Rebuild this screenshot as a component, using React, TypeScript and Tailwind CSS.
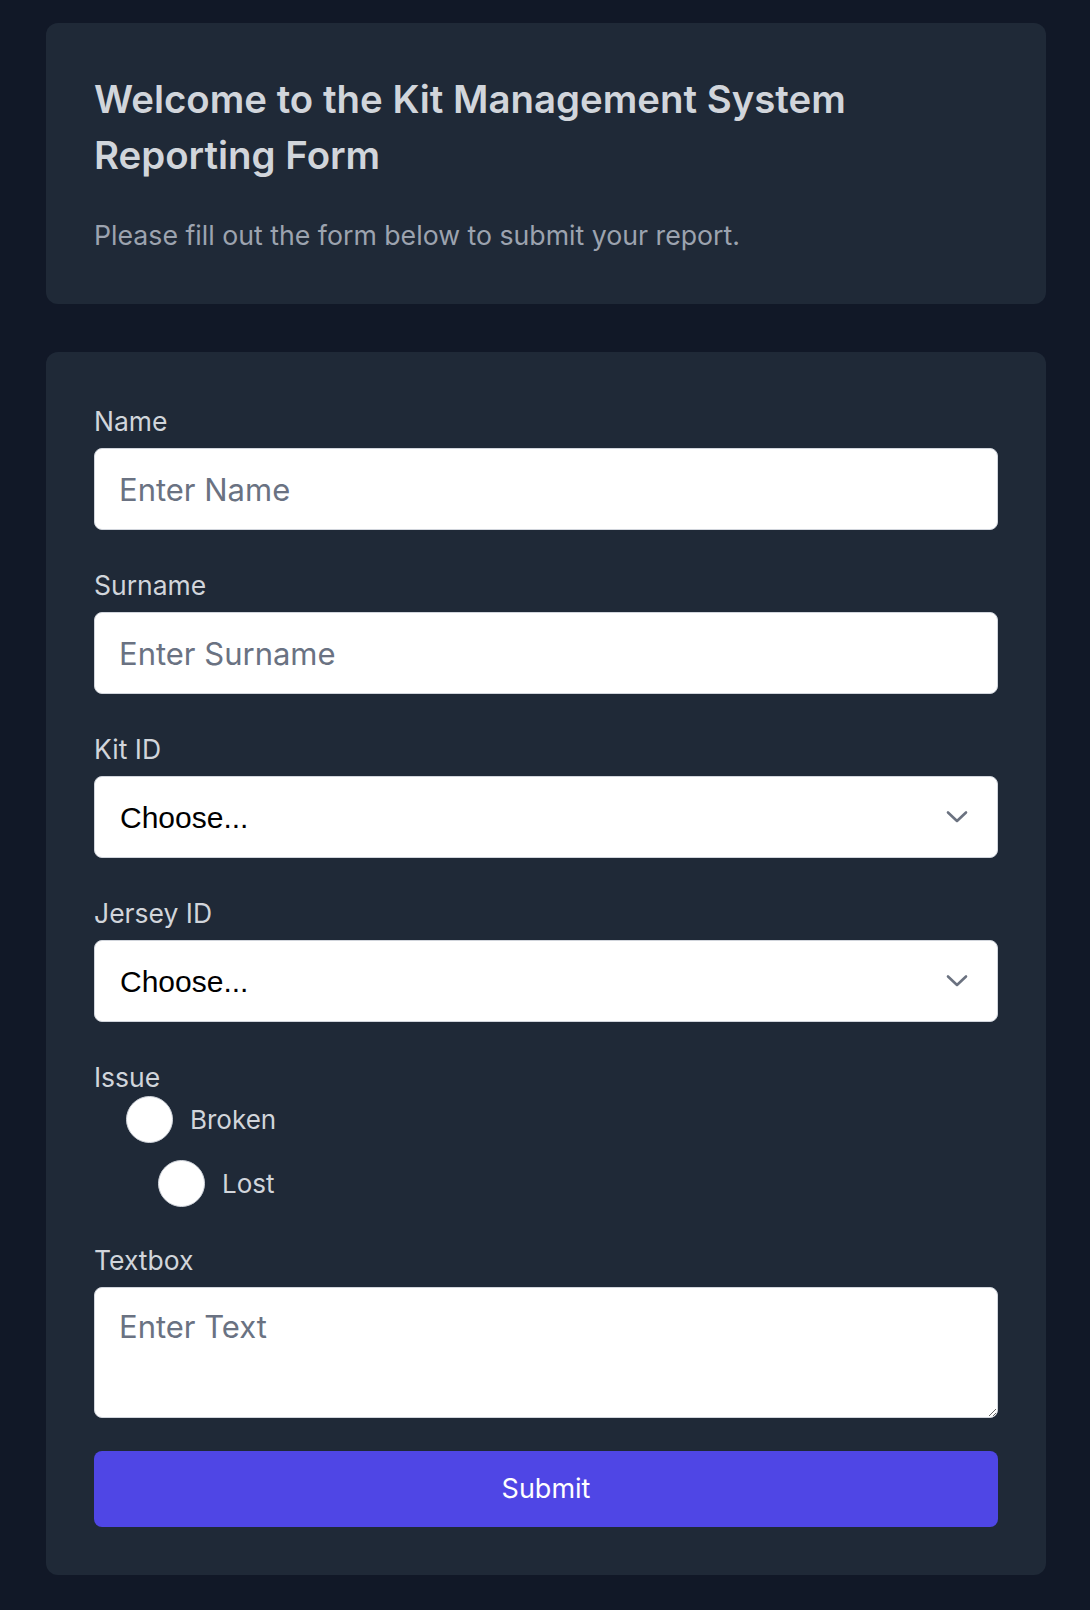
import React from "react";

const font = { fontFamily: "Inter, 'Noto Sans', sans-serif" };

function Chevron() {
  return (
    <svg
      className="pointer-events-none absolute right-[30px] top-1/2 -translate-y-1/2"
      width="22"
      height="14"
      viewBox="0 0 22 14"
      fill="none"
    >
      <path d="M2 2.5 L11 11 L20 2.5" stroke="#6b7280" strokeWidth="2.6" strokeLinecap="round" strokeLinejoin="round" />
    </svg>
  );
}

function Label({ children, className = "" }: { children: React.ReactNode; className?: string }) {
  return <label className={`block text-[26.5px] leading-[32px] text-[#d1d5db] ${className}`}>{children}</label>;
}

function TextField({ label, placeholder }: { label: string; placeholder: string }) {
  return (
    <div className="mb-[39px]">
      <Label className="mb-[11px]">{label}</Label>
      <input
        type="text"
        placeholder={placeholder}
        className="block h-[82px] w-full rounded-lg border border-gray-300 bg-white px-6 text-[31px] text-gray-900 placeholder:text-gray-500 outline-none"
      />
    </div>
  );
}

function SelectField({ label }: { label: string }) {
  return (
    <div className="mb-[39px]">
      <Label className="mb-[11px]">{label}</Label>
      <div className="relative">
        <select
          defaultValue=""
          className="block h-[82px] w-full appearance-none rounded-lg border border-gray-300 bg-white pl-[25px] pr-16 text-[30px] text-black outline-none"
          style={{ fontFamily: "'Liberation Sans', Arial, sans-serif" }}
        >
          <option value="">Choose...</option>
        </select>
        <Chevron />
      </div>
    </div>
  );
}

function Radio({ label, className = "" }: { label: string; className?: string }) {
  return (
    <label className={`flex items-center gap-[17px] ${className}`}>
      <span className="block h-[47px] w-[47px] shrink-0 rounded-full border border-gray-300 bg-white" />
      <span className="text-[26px] leading-[32px] text-[#d1d5db]">{label}</span>
    </label>
  );
}

export default function App() {
  return (
    <div className="min-h-screen bg-[#111827] pt-[23px] pb-[35px]" style={font}>
      <div className="ml-[46px] w-[1000px] rounded-xl bg-[#1f2937] px-12 pt-12 pb-[53px]">
        <h1 className="text-[38.4px] font-semibold leading-[56px] text-[#d1d5db]">
          Welcome to the Kit Management System
          <br />
          Reporting Form
        </h1>
        <p className="mt-9 text-[26.7px] leading-[32px] text-[#9ca3af]">
          Please fill out the form below to submit your report.
        </p>
      </div>

      <form
        className="ml-[46px] mt-12 w-[1000px] rounded-xl bg-[#1f2937] px-12 pt-[53px] pb-12"
        onSubmit={(e) => e.preventDefault()}
      >
        <TextField label="Name" placeholder="Enter Name" />
        <TextField label="Surname" placeholder="Enter Surname" />
        <SelectField label="Kit ID" />
        <SelectField label="Jersey ID" />

        <div className="mb-[37px]">
          <Label>Issue</Label>
          <Radio label="Broken" className="ml-8 mt-[3px]" />
          <Radio label="Lost" className="ml-16 mt-[17px]" />
        </div>

        <div className="mb-[33px]">
          <Label className="mb-[11px]">Textbox</Label>
          <textarea
            placeholder="Enter Text"
            className="block h-[131px] w-full rounded-lg border border-gray-300 bg-white px-6 pt-[19px] text-[31px] leading-[40px] text-gray-900 placeholder:text-gray-500 outline-none"
          />
        </div>

        <button type="submit" className="block h-[76px] w-full rounded-lg bg-[#4f46e5] text-[27px] text-white">
          Submit
        </button>
      </form>
    </div>
  );
}
